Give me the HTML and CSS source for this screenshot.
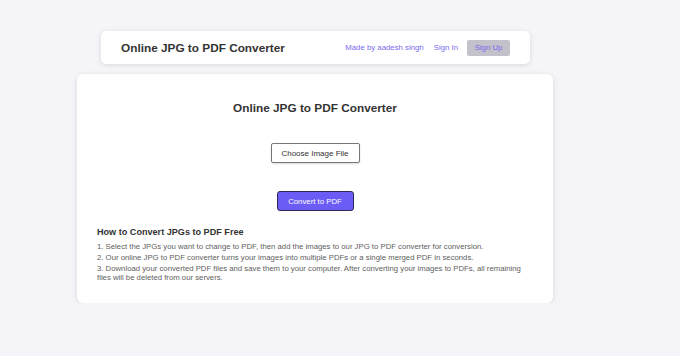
FILE: index.html
```
<!DOCTYPE html>
<html lang="en">
<head>
  <meta charset="UTF-8" />
  <meta name="viewport" content="width=device-width, initial-scale=1.0" />
  <title>Online JPG to PDF Converter</title>
  <link rel="stylesheet" href="styles.css">
</head>
<body>
  <div class="wrapper">
    <header class="topbar">
      <h1 class="brand">Online JPG to PDF Converter</h1>
      <nav class="links">
        <a href="#" class="credit">Made by aadesh singh</a>
        <a href="#" class="signin">Sign In</a>
        <a href="#" class="signup">Sign Up</a>
      </nav>
    </header>

    <main class="card">
      <h2 class="card-title">Online JPG to PDF Converter</h2>

      <div class="actions">
        <button class="choose-btn">Choose Image File</button>
        <button class="convert-btn">Convert to PDF</button>
      </div>

      <h3 class="howto-title">How to Convert JPGs to PDF Free</h3>
      <ol class="steps">
        <li>1. Select the JPGs you want to change to PDF, then add the images to our JPG to PDF converter for conversion.</li>
        <li>2. Our online JPG to PDF converter turns your images into multiple PDFs or a single merged PDF in seconds.</li>
        <li>3. Download your converted PDF files and save them to your computer. After converting your images to PDFs, all remaining files will be deleted from our servers.</li>
      </ol>
    </main>
  </div>
</body>
</html>
```

FILE: styles.css
```
:root {
  --bg: #f4f4f9;
  --purple: #7a6bf0;
  --purple-btn: #6b5cf6;
  --text-dark: #333;
  --text-muted: #606060;
}

body {
  margin: 0;
  font-family: "Liberation Sans", Arial, sans-serif;
  background: var(--bg);
  color: var(--text-dark);
}

.wrapper {
  width: 476px;
  margin-left: 77px;
  padding-top: 31px;
}

.topbar {
  margin: 0 23px 0 24px;
  height: 33px;
  background: #fff;
  border-radius: 5px;
  box-shadow: 0 1px 5px rgba(0, 0, 0, 0.12);
  display: flex;
  align-items: center;
  justify-content: space-between;
  padding: 0 20px 0 20px;
}

.brand {
  margin: 0;
  font-size: 11.8px;
  font-weight: bold;
  color: #333;
}

.links {
  display: flex;
  align-items: center;
  white-space: nowrap;
}

.links a {
  color: var(--purple);
  text-decoration: none;
  font-size: 7.8px;
}

.signin {
  margin-left: 10px;
}

.signup {
  margin-left: 9px;
  background: #c3c1c9;
  border-radius: 2px;
  width: 43px;
  height: 16px;
  line-height: 16px;
  text-align: center;
}

.card {
  margin-top: 10px;
  background: #fff;
  border-radius: 6px;
  box-shadow: 0 1px 5px rgba(0, 0, 0, 0.12);
  padding: 27px 20px 19px;
}

.card-title {
  margin: 0;
  text-align: center;
  font-size: 11.8px;
  font-weight: bold;
  color: #333;
}

.actions {
  display: flex;
  flex-direction: column;
  align-items: center;
  gap: 28px;
  margin-top: 28px;
}

.choose-btn {
  font-family: inherit;
  font-size: 8px;
  color: #333;
  background: #fff;
  border: 1px solid #777;
  border-radius: 2px;
  width: 89px;
  height: 20px;
  box-shadow: 0 1px 2px rgba(0, 0, 0, 0.15);
}

.convert-btn {
  font-family: inherit;
  font-size: 7.8px;
  color: #fff;
  background: var(--purple-btn);
  border: 1.5px solid #2f2a55;
  border-radius: 3px;
  width: 77px;
  height: 20px;
}

.howto-title {
  margin: 16px 0 5px;
  font-size: 9.1px;
  font-weight: bold;
  color: #333;
}

.steps {
  list-style: none;
  margin: 0;
  padding: 0;
}

.steps li {
  font-size: 7.75px;
  line-height: 9px;
  color: var(--text-muted);
  margin-bottom: 2px;
}
```
